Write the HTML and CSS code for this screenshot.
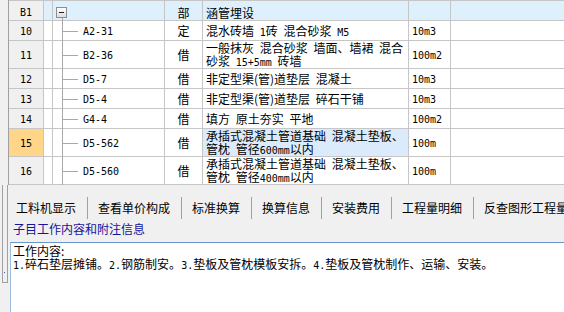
FILE: index.html
```html
<!DOCTYPE html>
<html lang="zh">
<head>
<meta charset="utf-8">
<link rel="stylesheet" href="styles.css">
</head>
<body>
<div class="grid">
  <div class="row hdr">
    <div class="c num">B1</div>
    <div class="c"></div>
    <div class="c tree root"><span class="exp"></span></div>
    <div class="c type">部</div>
    <div class="c name"><div>涵管埋设</div></div>
    <div class="c unit"></div>
    <div class="c"></div>
  </div>
  <div class="row">
    <div class="c num">10</div>
    <div class="c"></div>
    <div class="c tree code">A2-31</div>
    <div class="c type">定</div>
    <div class="c name"><div>混水砖墙 <span class="lat">1</span>砖 混合砂浆 <span class="lat">M5</span></div></div>
    <div class="c unit">10m3</div>
    <div class="c"></div>
  </div>
  <div class="row tall">
    <div class="c num">11</div>
    <div class="c"></div>
    <div class="c tree code">B2-36</div>
    <div class="c type">借</div>
    <div class="c name"><div>一般抹灰 混合砂浆 墙面、墙裙 混合<br>砂浆 <span class="lat">15+5mm</span> 砖墙</div></div>
    <div class="c unit">100m2</div>
    <div class="c"></div>
  </div>
  <div class="row">
    <div class="c num">12</div>
    <div class="c"></div>
    <div class="c tree code">D5-7</div>
    <div class="c type">借</div>
    <div class="c name"><div>非定型渠(管)道垫层 混凝土</div></div>
    <div class="c unit">10m3</div>
    <div class="c"></div>
  </div>
  <div class="row">
    <div class="c num">13</div>
    <div class="c"></div>
    <div class="c tree code">D5-4</div>
    <div class="c type">借</div>
    <div class="c name"><div>非定型渠(管)道垫层 碎石干铺</div></div>
    <div class="c unit">10m3</div>
    <div class="c"></div>
  </div>
  <div class="row">
    <div class="c num">14</div>
    <div class="c"></div>
    <div class="c tree code">G4-4</div>
    <div class="c type">借</div>
    <div class="c name"><div>填方 原土夯实 平地</div></div>
    <div class="c unit">100m2</div>
    <div class="c"></div>
  </div>
  <div class="row tall">
    <div class="c num sel">15</div>
    <div class="c"></div>
    <div class="c tree code">D5-562</div>
    <div class="c type">借</div>
    <div class="c name hl"><div>承插式混凝土管道基础 混凝土垫板、<br>管枕 管径<span class="lat">600mm</span>以内</div></div>
    <div class="c unit">100m</div>
    <div class="c"></div>
  </div>
  <div class="row tall">
    <div class="c num">16</div>
    <div class="c"></div>
    <div class="c tree code">D5-560</div>
    <div class="c type">借</div>
    <div class="c name"><div>承插式混凝土管道基础 混凝土垫板、<br>管枕 管径<span class="lat">400mm</span>以内</div></div>
    <div class="c unit">100m</div>
    <div class="c"></div>
  </div>
</div>
<div class="lower">
  <div class="strip"><div class="handle"><span class="dot"></span></div></div>
  <div class="panel">
    <div class="tabs">
      <div class="tab">工料机显示</div>
      <div class="tab">查看单价构成</div>
      <div class="tab">标准换算</div>
      <div class="tab">换算信息</div>
      <div class="tab">安装费用</div>
      <div class="tab">工程量明细</div>
      <div class="tab">反查图形工程量</div>
    </div>
    <div class="label">子目工作内容和附注信息</div>
    <div class="box">
      <div>工作内容:</div>
      <div><span class="lat">1.</span>碎石垫层摊铺。<span class="lat">2.</span>钢筋制安。<span class="lat">3.</span>垫板及管枕模板安拆。<span class="lat">4.</span>垫板及管枕制作、运输、安装。</div>
    </div>
  </div>
</div>
</body>
</html>
```

FILE: styles.css
```css
* { box-sizing: border-box; margin: 0; padding: 0; }
html, body { width: 564px; height: 312px; overflow: hidden; }
body {
  background: #f0f0f0;
  font: 12px "Noto Sans CJK SC", sans-serif;
  color: #000;
}
.lat { font: 10px "DejaVu Sans Mono", monospace; }

.grid {
  margin-left: 8px;
  height: 185px;
  background: #c6c6c6;
  border-left: 1px solid #a0a0a0;
  padding: 1px 0 1px 0;
  display: flex;
  flex-direction: column;
  gap: 1px;
  overflow: hidden;
}
.row {
  display: grid;
  grid-template-columns: 34px 8px 111px 37px 205px 41px 1fr;
  gap: 1px;
  height: 19px;
  flex: none;
}
.row.tall { height: 27px; }
.c {
  background: #fff;
  display: flex;
  align-items: center;
  white-space: nowrap;
  overflow: hidden;
}
.num {
  background: #f0f0f0;
  justify-content: center;
  font: 10px "DejaVu Sans Mono", monospace;
  padding-top: 1px;
}
.hdr .c { background: #dff0fd; padding-top: 3px; }
.hdr .c.num { background: #f0f0f0; }
.num.sel { background: #ffd58a; }
.name.hl { background: #dcebfb; }
.type { justify-content: center; }
.name { padding-left: 3px; word-spacing: 3px; line-height: 13px; }
.unit { padding-left: 3px; font: 10px "DejaVu Sans Mono", monospace; padding-top: 1px; }

.tree { position: relative; overflow: visible; }
.tree::before {
  content: "";
  position: absolute;
  left: 9px; top: -1px; bottom: -1px;
  width: 1px;
  background: #a8a8a8;
}
.tree.code::after {
  content: "";
  position: absolute;
  left: 10px; top: 50%;
  width: 15px; height: 1px;
  background: #a8a8a8;
}
.code { padding-left: 30px; font: 10px "DejaVu Sans Mono", monospace; padding-top: 1px; }
.tree.root { align-items: flex-start; padding: 6px 0 0 3px; }
.tree.root::before { top: 17px; }
.exp {
  width: 11px; height: 11px;
  border: 1px solid #8e8e8e;
  background: linear-gradient(#ffffff, #dcdcdc);
  display: flex;
  align-items: center;
  justify-content: center;
}
.exp::before {
  content: "";
  width: 5px; height: 1px;
  background: #202020;
}

.lower { display: flex; height: 127px; }
.strip { width: 10px; flex: none; padding-left: 2px; }
.handle {
  width: 6px; height: 98px;
  border: 1px solid #a0a0a0;
  border-top: none;
  display: flex;
  align-items: flex-end;
  padding: 0 0 9px 1px;
}
.dot { width: 1px; height: 1px; background: #3060a0; }
.panel { flex: 1; display: flex; flex-direction: column; min-width: 0; }
.tabs {
  display: flex;
  padding: 12px 0 0 6px;
  height: 34px;
  overflow: hidden;
  flex: none;
}
.tab {
  height: 22px;
  line-height: 22px;
  padding: 0 11px 0 10px;
  border-right: 1px solid #a0a0a0;
  white-space: nowrap;
  flex: none;
}
.tab:first-child { padding-left: 0; }
.tab:last-child { border-right: none; }
.label {
  color: #14149c;
  padding: 2px 0 0 3px;
  line-height: 16px;
  height: 23px;
  flex: none;
}
.box {
  flex: 1;
  background: #fff;
  border-top: 1px solid #6b97c6;
  border-left: 1px solid #9dbde0;
  padding: 1px 0 0 2px;
  line-height: 13px;
  white-space: nowrap;
  overflow: hidden;
}
```
